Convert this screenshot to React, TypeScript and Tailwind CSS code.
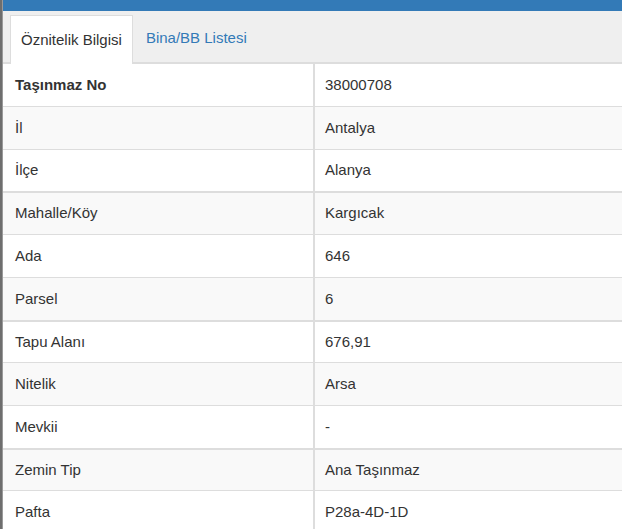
const rows = [
  { label: "Taşınmaz No", value: "38000708", h: "h-[42px]", top: "", bold: true },
  { label: "İl", value: "Antalya", h: "h-[43px]", top: "border-t" },
  { label: "İlçe", value: "Alanya", h: "h-[42px]", top: "border-t" },
  { label: "Mahalle/Köy", value: "Kargıcak", h: "h-[43px]", top: "border-t-2" },
  { label: "Ada", value: "646", h: "h-[43px]", top: "border-t" },
  { label: "Parsel", value: "6", h: "h-[43px]", top: "border-t" },
  { label: "Tapu Alanı", value: "676,91", h: "h-[42px]", top: "border-t-2" },
  { label: "Nitelik", value: "Arsa", h: "h-[43px]", top: "border-t" },
  { label: "Mevkii", value: "-", h: "h-[43px]", top: "border-t" },
  { label: "Zemin Tip", value: "Ana Taşınmaz", h: "h-[42px]", top: "border-t-2" },
  { label: "Pafta", value: "P28a-4D-1D", h: "h-[43px]", top: "border-t" },
];

export default function App() {
  return (
    <div
      className="flex h-[529px] w-full overflow-hidden bg-white text-[15px] text-[#333333]"
      style={{ fontFamily: '"Liberation Sans", Arial, sans-serif' }}
    >
      <div className="w-[3px] shrink-0 border-r border-[#9a9a9a] bg-[#6e6e6e]" />
      <div className="flex min-w-0 flex-1 flex-col">
        <div className="h-[11px] shrink-0 bg-[#337ab7]" />

        <div className="flex h-[53px] shrink-0 items-end border-b-2 border-[#dddddd] bg-[#efefef] pl-[7px]">
          <div className="-mb-[2px] flex h-[49px] items-center border border-b-0 border-[#dddddd] bg-white px-[10px]">
            Öznitelik Bilgisi
          </div>
          <div className="flex h-[47px] items-center px-[13px] text-[#337ab7]">
            Bina/BB Listesi
          </div>
        </div>

        <div className="flex flex-col">
          {rows.map((r, i) => (
            <div
              key={r.label}
              className={`grid shrink-0 grid-cols-[312px_1fr] border-[#dddddd] ${r.h} ${r.top} ${
                i % 2 === 1 ? "bg-[#f9f9f9]" : "bg-white"
              }`}
            >
              <div
                className={`flex items-center border-r-2 border-[#dddddd] pl-[12px] ${
                  r.bold ? "font-bold" : ""
                }`}
              >
                {r.label}
              </div>
              <div className="flex items-center pl-[10px]">{r.value}</div>
            </div>
          ))}
        </div>
      </div>
    </div>
  );
}
